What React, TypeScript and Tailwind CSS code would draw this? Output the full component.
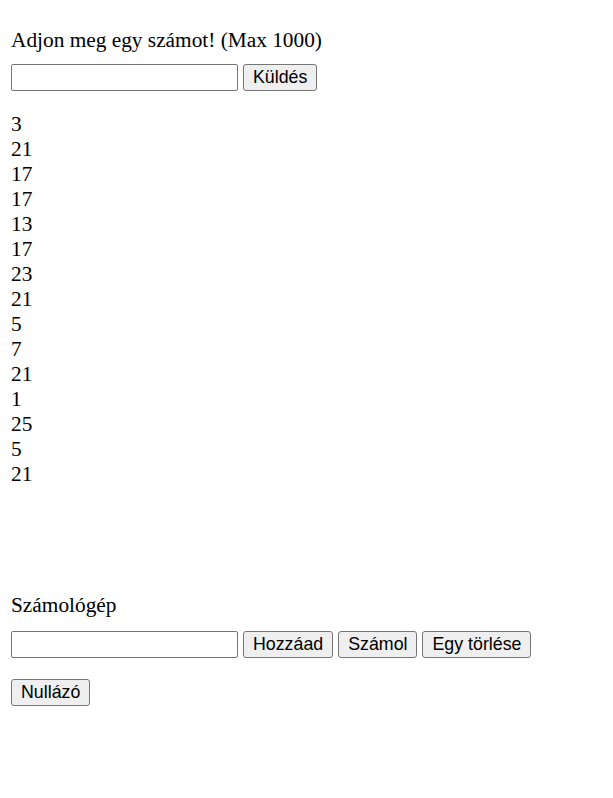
const numbers = [3, 21, 17, 17, 13, 17, 23, 21, 5, 7, 21, 1, 25, 5, 21];

const btn =
  "h-[27px] px-[9px] border border-[#767676] rounded-[3px] bg-[#efefef] text-black text-[17.8px] leading-none font-['Liberation_Sans',Arial,sans-serif]";

export default function App() {
  return (
    <div className="min-h-[798px] bg-white text-black px-[11px] pt-[28px] font-['Liberation_Serif','Times_New_Roman',serif] text-[21.33px]">
      <p className="leading-[24.5px]">Adjon meg egy számot! (Max 1000)</p>
      <div className="mt-[11.5px] flex gap-[5px]">
        <input
          type="text"
          className="w-[227px] h-[27px] border border-[#767676] rounded-[2px] bg-white"
        />
        <button className={btn}>Küldés</button>
      </div>

      <div className="mt-[21px] leading-[25px]">
        {numbers.map((n, i) => (
          <div key={i}>{n}</div>
        ))}
      </div>

      <p className="mt-[106px] leading-[25px]">Számológép</p>
      <div className="mt-[13px] flex gap-[5px]">
        <input
          type="text"
          className="w-[227px] h-[27px] border border-[#767676] rounded-[2px] bg-white"
        />
        <button className={btn}>Hozzáad</button>
        <button className={btn}>Számol</button>
        <button className={btn}>Egy törlése</button>
      </div>
      <div className="mt-[21px] flex">
        <button className={btn}>Nullázó</button>
      </div>
    </div>
  );
}
